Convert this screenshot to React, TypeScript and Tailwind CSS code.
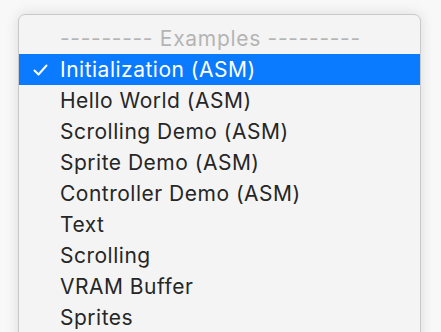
const items = [
  "Hello World (ASM)",
  "Scrolling Demo (ASM)",
  "Sprite Demo (ASM)",
  "Controller Demo (ASM)",
  "Text",
  "Scrolling",
  "VRAM Buffer",
  "Sprites",
];

function Check() {
  return (
    <svg width="15" height="12" viewBox="0 0 15 12" fill="none">
      <path
        d="M1.5 6.5 L5.5 10.5 L13.5 1.5"
        stroke="white"
        strokeWidth="2"
        strokeLinecap="round"
        strokeLinejoin="round"
      />
    </svg>
  );
}

export default function App() {
  return (
    <div
      className="h-[332px] w-[441px] overflow-hidden bg-[#f8f8f8] pl-[18px] pt-[14px]"
      style={{ fontFamily: "Inter, sans-serif" }}
    >
      <div className="h-[340px] w-[403px] rounded-t-[7px] border border-[#c9c9c9] bg-[#f4f4f4] pt-2 text-[21px] tracking-[0.5px] shadow-[0_0_14px_rgba(0,0,0,0.12)]">
        <div className="flex h-[31px] items-center pl-[41px] tracking-[0.7px] text-[#b4b4b4]">
          --------- Examples ---------
        </div>
        <div className="flex h-[31px] items-center bg-[#0a7aff] text-white">
          <span className="flex w-[41px] justify-center pl-[2px]">
            <Check />
          </span>
          Initialization (ASM)
        </div>
        {items.map((item) => (
          <div
            key={item}
            className="flex h-[31px] items-center pl-[41px] text-[#262626]"
          >
            {item}
          </div>
        ))}
      </div>
    </div>
  );
}
